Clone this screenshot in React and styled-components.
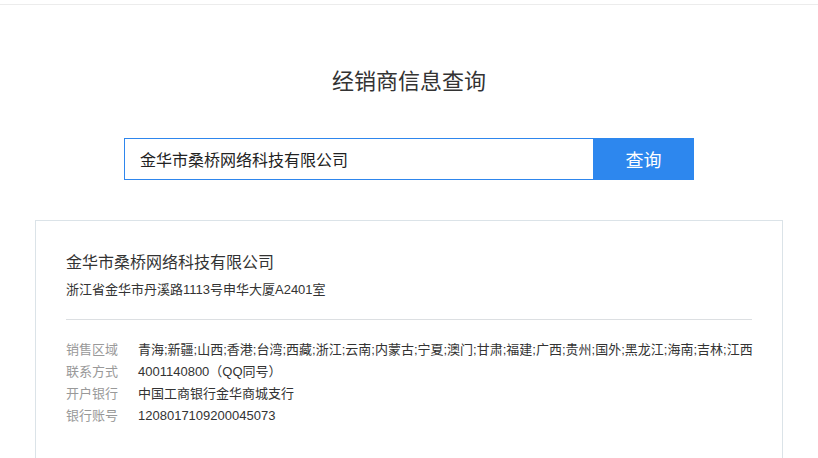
import styled, { createGlobalStyle } from 'styled-components';

const GlobalStyle = createGlobalStyle`
	html, body {
		margin: 0;
		padding: 0;
		background: #fff;
	}
	body {
		font-family: "Liberation Sans", "Noto Sans CJK SC", sans-serif;
		color: #333;
	}
	* {
		box-sizing: border-box;
	}
`;

const dealer = {
	name: '金华市桑桥网络科技有限公司',
	address: '浙江省金华市丹溪路1113号申华大厦A2401室',
	details: [
		{ label: '销售区域', value: '青海;新疆;山西;香港;台湾;西藏;浙江;云南;内蒙古;宁夏;澳门;甘肃;福建;广西;贵州;国外;黑龙江;海南;吉林;江西' },
		{ label: '联系方式', value: '4001140800（QQ同号）' },
		{ label: '开户银行', value: '中国工商银行金华商城支行' },
		{ label: '银行账号', value: '1208017109200045073' },
	],
};

export default function App() {
	return (
		<>
			<GlobalStyle />
			<TopBar />
			<Main>
				<Title>经销商信息查询</Title>
				<SearchForm onSubmit={(e) => e.preventDefault()}>
					<SearchInput type="text" defaultValue={dealer.name} />
					<SearchButton type="submit">查询</SearchButton>
				</SearchForm>
				<Card>
					<CompanyName>{dealer.name}</CompanyName>
					<Address>{dealer.address}</Address>
					<Details>
						{dealer.details.map((item) => (
							<Row key={item.label}>
								<Label>{item.label}</Label>
								<Value>{item.value}</Value>
							</Row>
						))}
					</Details>
				</Card>
			</Main>
		</>
	);
}

const TopBar = styled.header`
	height: 5px;
	border-bottom: 1px solid #ececec;
`;

const Main = styled.main`
	display: flex;
	flex-direction: column;
	align-items: center;
	padding-top: 62px;
`;

const Title = styled.h1`
	margin: 0;
	font-size: 22px;
	line-height: 30px;
	font-weight: normal;
	color: #333;
`;

const SearchForm = styled.form`
	display: flex;
	width: 570px;
	height: 42px;
	margin-top: 41px;
`;

const SearchInput = styled.input`
	flex: 1;
	height: 100%;
	padding: 0 15px;
	border: 1px solid #2e86ed;
	border-right: none;
	outline: none;
	font-family: inherit;
	font-size: 16px;
	color: #222;
`;

const SearchButton = styled.button`
	width: 101px;
	height: 100%;
	border: none;
	background: #2d87ee;
	color: #fff;
	font-family: inherit;
	font-size: 18px;
	cursor: pointer;
`;

const Card = styled.section`
	width: 748px;
	margin-top: 40px;
	padding: 30px 30px 40px;
	border: 1px solid #dbe3e8;
`;

const CompanyName = styled.h2`
	margin: 0;
	font-size: 16px;
	line-height: 24px;
	font-weight: normal;
	color: #333;
`;

const Address = styled.p`
	margin: 5px 0 0;
	font-size: 13px;
	line-height: 20px;
	color: #333;
`;

const Details = styled.div`
	margin-top: 19px;
	padding-top: 19px;
	border-top: 1px solid #dcdfe2;
`;

const Row = styled.div`
	display: flex;
	font-size: 13px;
	line-height: 22px;
`;

const Label = styled.span`
	flex: 0 0 72px;
	color: #999;
`;

const Value = styled.span`
	color: #333;
	white-space: nowrap;
`;
